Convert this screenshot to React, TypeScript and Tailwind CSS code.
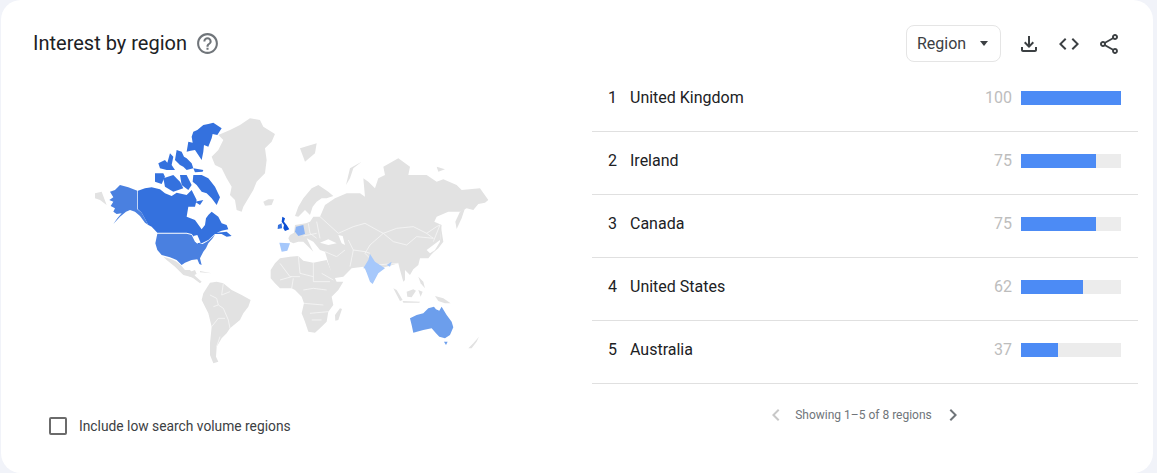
const rows = [
  { rank: 1, name: "United Kingdom", value: 100 },
  { rank: 2, name: "Ireland", value: 75 },
  { rank: 3, name: "Canada", value: 75 },
  { rank: 4, name: "United States", value: 62 },
  { rank: 5, name: "Australia", value: 37 },
];

const GREY = "#e2e2e2";
const CANADA = "#3471de";
const USA = "#4a80e0";
const LIGHT = "#a6c8fb";
const AUS = "#6c9eec";

// map shapes are traced in 3x units, one group per part of the map
const americas: [string, string][] = [
  [GREY, "395,140 415,120 430,90 415,75 450,60 480,45 510,25 540,30 550,50 585,72 575,95 555,115 560,150 555,190 530,215 520,240 490,290 485,305 470,300 465,270 450,255 455,230 440,205 425,175 405,165"],
  [GREY, "550,275 565,268 582,268 575,285 555,287"],
  [GREY, "45,250 65,245 80,285 60,270 45,265"],
  [GREY, "250,440 275,448 290,455 305,468 320,490 345,480 350,492 330,500 310,495 285,470 260,450"],
  [USA, "90,245 105,240 120,225 145,232 172,242 172,298 185,308 197,330 205,345 195,338 180,318 165,305 150,300 138,305 120,320 100,342 112,325 125,310 110,312 100,305 105,295 92,288 100,275 88,270 100,262"],
  [CANADA, "174,242 195,235 215,232 240,238 255,250 275,258 290,248 320,255 335,240 350,270 345,290 325,290 320,320 345,330 365,358 375,345 378,325 385,315 395,305 415,320 425,340 440,345 445,358 425,362 410,368 440,365 455,378 440,380 425,372 405,372 385,390 365,400 355,403 345,385 335,372 320,368 232,368 215,350 205,345 197,330 185,308 174,298"],
  [CANADA, "340,65 352,60 370,45 385,42 400,38 425,55 412,75 398,72 395,85 385,110 372,105 370,125 365,150 355,135 345,120 332,122 320,125 325,95 338,98 335,80"],
  [CANADA, "290,120 305,125 312,140 320,145 335,160 340,175 320,180 310,170 300,165 285,150"],
  [CANADA, "340,175 370,180 368,185 345,187"],
  [CANADA, "235,160 255,150 262,158 270,130 280,140 275,165 285,180 260,180 240,175"],
  [CANADA, "225,190 250,190 255,200 245,222 225,215"],
  [CANADA, "250,205 280,195 300,215 310,235 280,245 255,230"],
  [CANADA, "300,195 320,195 335,225 325,240 305,225"],
  [CANADA, "340,195 365,195 385,205 405,230 420,262 410,285 395,265 380,250 365,245 350,225 338,215"],
  [CANADA, "345,275 370,270 360,285"],
  [USA, "232,371 320,371 335,375 345,395 355,402 368,402 385,392 405,374 398,385 385,400 378,415 370,425 360,445 365,465 358,462 352,448 335,450 315,458 305,465 290,450 270,442 245,435 232,420 226,400"],
  ["#ffffff", "340,378 352,375 362,398 350,400"],
];

const eurasia: [string, string][] = [
  [GREY, "72,368 75,345 108,340 120,335 130,320 150,320 165,285 195,265 230,250 270,250 285,260 280,205 295,215 315,235 325,205 345,195 340,170 385,145 420,170 415,195 470,195 500,215 520,208 560,225 575,240 630,235 655,270 645,278 625,282 610,300 590,295 570,305 535,305 500,320 493,335 515,345 510,390 490,405 470,420 480,430 495,420 475,445 450,445 445,465 430,478 420,495 405,480 405,510 400,515 390,480 385,460 350,470 315,480 300,500 280,470 245,475 220,500 190,505 175,460 165,425 150,420 130,395 110,385 130,425 100,395 85,395 70,400 60,395 55,385 60,375"],
  [GREY, "75,318 85,290 100,265 125,235 145,225 175,245 190,258 170,265 155,265 140,275 128,290 120,315 105,300 85,320"],
  [GREY, "90,115 140,100 135,130 105,155"],
  [GREY, "228,225 240,175 275,155 250,175 240,205"],
  [GREY, "500,170 525,178 505,185"],
  [GREY, "585,295 575,325 560,357 556,335 570,305"],
  [GREY, "513,350 520,395 505,415 475,440 495,420 510,395"],
  ["#ffffff", "150,398 175,388 200,400 175,405"],
  ["#ffffff", "205,375 218,378 225,405 215,400"],
];

const eurasiaLines = [
  "M340 370 L380 355 L430 350 L470 370 L490 385 L440 380 L410 405 L370 395 Z",
  "M205 370 L250 350 L285 340 L330 365 L340 370 M300 405 L340 370 M470 370 L500 350 L510 345 L490 395",
  "M300 405 L285 430 L320 465 L385 460 M235 390 L250 420 L240 470 M250 420 L285 425 L300 430",
  "M115 340 L120 370 L140 385 M140 335 L150 385 M100 378 L140 370 M150 320 L205 370 M165 425 L200 440 L225 420",
];

const europeBlue: [string, string][] = [
  ["#0b4fd4", "37,320 45,325 42,335 50,345 58,358 45,363 40,355 42,345 35,335"],
  [CANADA, "24,345 35,340 36,355 23,357"],
  ["#89b2f4", "78,350 100,345 105,372 85,378 75,365"],
  [LIGHT, "28,398 60,400 52,422 35,425"],
];

const south: [string, string][] = [
  [GREY, "272,90 285,70 300,55 330,50 355,48 370,62 400,68 440,60 450,85 465,115 470,125 490,125 475,150 455,170 460,195 445,215 440,245 420,265 405,278 385,275 375,245 365,220 372,190 365,170 345,150 335,145 300,145 285,130 272,115"],
  [GREY, "480,205 486,207 475,240 466,242 465,225"],
  [GREY, "90,128 110,125 130,130 155,150 185,165 212,180 205,200 190,220 180,240 150,265 140,280 125,295 110,320 108,350 115,365 100,370 90,345 90,310 95,260 85,220 65,180 70,160"],
  [GREY, "0,75 15,90 30,90 48,110 65,125 60,130 40,115 20,105 5,95"],
  [GREY, "60,93 95,100 60,97"],
  [GREY, "640,145 650,150 668,180 660,183"],
  [GREY, "680,155 700,148 708,152 695,172 682,170"],
  [GREY, "668,183 720,185 718,188 670,188"],
  [GREY, "715,150 728,155 722,170"],
  [GREY, "765,168 790,175 812,190 795,190 775,183"],
  [GREY, "715,110 730,125 735,145 722,130"],
  [GREY, "865,325 880,310 897,290 890,305 875,325"],
  [LIGHT, "570,42 585,65 615,85 595,100 578,132 570,125 555,85 550,85 565,60"],
  [LIGHT, "620,75 635,65 630,80"],
  [AUS, "690,235 710,225 730,220 745,205 762,200 768,208 778,212 785,200 800,225 815,245 820,262 810,285 795,295 778,290 768,280 755,265 730,270 700,278 695,255"],
  [AUS, "792,305 803,305 798,315"],
];

const southLines = [
  "M355 48 L360 100 L400 110 M300 70 L330 110 L360 110 M400 68 L400 125 M400 125 L450 125 M370 150 L400 145 L440 150 M372 190 L430 195 M390 220 L445 215 M395 240 L425 240 M300 120 L335 110 M335 145 L340 115 M425 100 L460 120",
  "M90 165 L110 175 L115 195 L130 205 L145 240 L150 265 M130 130 L125 165 L150 155 M95 260 L115 235 L135 235 M110 320 L120 290 M100 200 L115 195",
];

function Shapes({ items, lines = [], at }: { items: [string, string][]; lines?: string[]; at: string }) {
  return (
    <g transform={`translate(${at}) scale(0.3333)`}>
      {items.map(([fill, points]) => (
        <polygon key={points} points={points} fill={fill} />
      ))}
      {lines.map((d) => (
        <path key={d} d={d} fill="none" stroke="#f8f8f8" strokeWidth="2.2" />
      ))}
    </g>
  );
}

function WorldMap() {
  return (
    <svg viewBox="80 110 420 260" className="ml-[79px] mt-[41px] h-[260px] w-[420px] blur-[0.3px]">
      <Shapes items={americas} at="80 110" />
      <Shapes items={eurasia} lines={eurasiaLines} at="270 110" />
      <Shapes items={south} lines={southLines} at="180 240" />
      <Shapes items={europeBlue} at="270 110" />
    </svg>
  );
}

export default function App() {
  return (
    <div className="h-[473px] w-[1157px] overflow-hidden bg-[#f1f3f9] pl-[1px] font-['Roboto',sans-serif]">
      <div className="h-[473px] w-[1152px] rounded-[20px] bg-white">
        <div className="flex items-center justify-between pl-[32px] pr-[32px] pt-[25px]">
          <div className="flex items-center">
            <h2 className="-mt-[1px] text-[20px] text-[#202124]">Interest by region</h2>
            <svg viewBox="0 0 24 24" className="ml-[8px] size-[25px]" fill="#70757a">
              <path d="M11 18h2v-2h-2v2zm1-16C6.48 2 2 6.48 2 12s4.48 10 10 10 10-4.48 10-10S17.52 2 12 2zm0 18c-4.41 0-8-3.59-8-8s3.59-8 8-8 8 3.59 8 8-3.59 8-8 8zm0-14c-2.21 0-4 1.79-4 4h2c0-1.1.9-2 2-2s2 .9 2 2c0 2-3 1.75-3 5h2c0-2.25 3-2.5 3-5 0-2.21-1.79-4-4-4z" />
            </svg>
          </div>
          <div className="flex items-center">
            <div className="flex h-[37px] w-[95px] items-center justify-between rounded-[8px] border border-[#e5e5e5] pl-[10px] pr-[12px] text-[16px] text-[#3c4043]">
              Region
              <span className="h-0 w-0 border-x-[4.5px] border-t-[5px] border-x-transparent border-t-[#3c4043]" />
            </div>
            <div className="ml-[16px] flex gap-[16px] text-[#3c4043]">
              <svg viewBox="0 0 24 24" className="size-[24px]" fill="currentColor">
                <path d="M18 15v3H6v-3H4v3c0 1.1.9 2 2 2h12c1.1 0 2-.9 2-2v-3h-2zm-1-4l-1.41-1.41L13 12.17V4h-2v8.17L8.41 9.59 7 11l5 5 5-5z" />
              </svg>
              <svg viewBox="0 0 24 24" className="size-[24px]" fill="currentColor">
                <path d="M9.4 16.6L4.8 12l4.6-4.6L8 6l-6 6 6 6 1.4-1.4zm5.2 0l4.6-4.6-4.6-4.6L16 6l6 6-6 6-1.4-1.4z" />
              </svg>
              <svg viewBox="0 0 24 24" className="size-[24px]" fill="currentColor">
                <path d="M18 16.08c-.76 0-1.44.3-1.96.77L8.91 12.7c.05-.23.09-.46.09-.7s-.04-.47-.09-.7l7.05-4.11c.54.5 1.25.81 2.04.81 1.66 0 3-1.34 3-3s-1.34-3-3-3-3 1.34-3 3c0 .24.04.47.09.7L8.04 9.81C7.5 9.31 6.79 9 6 9c-1.66 0-3 1.34-3 3s1.34 3 3 3c.79 0 1.5-.31 2.04-.81l7.12 4.16c-.05.21-.08.43-.08.65 0 1.61 1.31 2.92 2.92 2.92 1.61 0 2.92-1.31 2.92-2.92s-1.31-2.92-2.92-2.92zM18 4c.55 0 1 .45 1 1s-.45 1-1 1-1-.45-1-1 .45-1 1-1zM6 13c-.55 0-1-.45-1-1s.45-1 1-1 1 .45 1 1-.45 1-1 1zm12 7.02c-.55 0-1-.45-1-1s.45-1 1-1 1 .45 1 1-.45 1-1 1z" />
              </svg>
            </div>
          </div>
        </div>
        <div className="mt-[7px] flex">
          <div className="w-[591px]">
            <WorldMap />
            <label className="ml-[48px] mt-[46px] flex items-center">
              <span className="size-[18px] rounded-[2px] border-2 border-[#6b6b6b]" />
              <span className="ml-[12px] text-[13.8px] text-[#3c4043]">Include low search volume regions</span>
            </label>
          </div>
          <div className="w-[546px]">
            {rows.map((r) => (
              <div key={r.rank} className="flex h-[63px] items-center border-b border-[#e0e0e0] pb-[5px]">
                <span className="w-[38px] pl-[16px] text-[16px] text-[#202124]">{r.rank}</span>
                <span className="flex-1 text-[16px] text-[#202124]">{r.name}</span>
                <span className="mr-[9px] text-[16px] text-[#bdbdbd]">{r.value}</span>
                <div className="mr-[17px] h-[14px] w-[100px] bg-[#ececec]">
                  <div className="h-full bg-[#4c8bf5]" style={{ width: `${r.value}%` }} />
                </div>
              </div>
            ))}
            <div className="mt-[19px] flex items-center justify-center pr-[1px] text-[12px] text-[#70757a]">
              <svg viewBox="0 0 24 24" className="mr-[7px] size-[24px]" fill="#c8c8c8">
                <path d="M15.41 7.41L14 6l-6 6 6 6 1.41-1.41L10.83 12z" />
              </svg>
              Showing 1–5 of 8 regions
              <svg viewBox="0 0 24 24" className="ml-[9px] size-[24px]" fill="#70757a">
                <path d="M10 6L8.59 7.41 13.17 12l-4.58 4.59L10 18l6-6z" />
              </svg>
            </div>
          </div>
        </div>
      </div>
    </div>
  );
}
